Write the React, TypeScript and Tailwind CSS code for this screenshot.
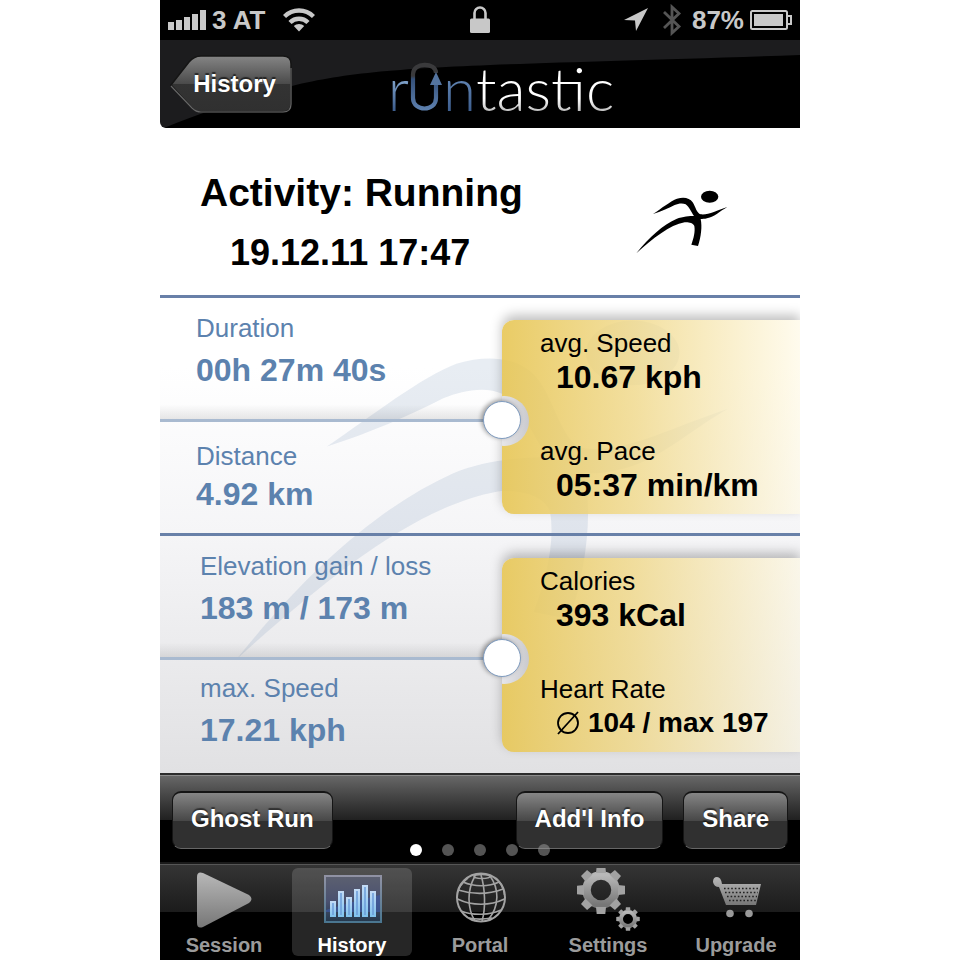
import type { ReactNode } from "react";

const RunnerShape = () => (
    <>
        <ellipse cx="270" cy="80" rx="26" ry="18" />
        <path d="M100 132C125 115 153 93 172 86C192 80 210 83 219 97C228 111 231 130 243 133C265 136 290 122 323 111C300 124 285 140 262 145C255 147 248 147 243 147C248 170 244 200 235 228L215 224C222 205 227 185 224 168C220 158 205 156 195 157C150 165 100 205 50 250C90 200 130 165 170 147C190 139 210 138 223 138C214 126 210 112 198 103C188 98 175 101 165 105C145 115 125 124 100 132Z" />
    </>
);

const StatusBar = () => (
    <div className="grid h-10 grid-cols-3 items-center bg-black px-2 text-[26px] leading-10 font-bold text-[#c8c8c8]">
        <div className="flex items-center gap-[6px]">
            <svg width="38" height="20" viewBox="0 0 38 20" fill="currentColor">
                <path d="M0 12h6v8H0zM8 10h6v10H8zM16 7h6v13h-6zM24 4h6v16h-6zM32 0h6v20h-6z" />
            </svg>
            <span>3 AT</span>
            <svg className="ml-3" width="32" height="24" viewBox="0 0 32 24" fill="none" stroke="currentColor" strokeWidth="4.4">
                <path d="M1.5 8.5C9.5 .5 22.5 .5 30.5 8.5M7 14.5C12 9.5 20 9.5 25 14.5" />
                <path d="M16 23.5L10.8 18C13.5 15.3 18.5 15.3 21.2 18Z" fill="currentColor" stroke="none" />
            </svg>
        </div>
        <svg className="mx-auto" width="20" height="28" viewBox="0 0 20 28">
            <path d="M4.5 13V7a5.5 5.5 0 0 1 11 0v6" fill="none" stroke="currentColor" strokeWidth="2.6" />
            <rect y="12.5" width="20" height="14.5" rx="1.5" fill="currentColor" />
        </svg>
        <div className="flex items-center justify-end gap-[6px] whitespace-nowrap">
            <svg className="mr-2" width="24" height="24" viewBox="0 0 24 24" fill="currentColor">
                <path d="M24 0L12 23L11 12.5L0 12Z" />
            </svg>
            <svg className="mr-1" width="20" height="32" viewBox="0 0 20 32" fill="none" stroke="#555" strokeWidth="2.8">
                <path d="M2 8L17 22.5L10 29V3L17 9.5L2 24" />
            </svg>
            <span>87%</span>
            <svg width="42" height="20" viewBox="0 0 42 20">
                <rect x="1" y="1" width="36" height="18" rx="1.5" fill="none" stroke="currentColor" strokeWidth="2" />
                <rect x="4" y="4" width="29" height="12" fill="currentColor" />
                <path d="M37 6h4v8h-4" fill="none" stroke="currentColor" strokeWidth="2" />
            </svg>
        </div>
    </div>
);

const Logo = () => (
    <h1 className="flex items-baseline font-['Lato',sans-serif] text-6xl leading-[70px] font-light text-white" aria-label="runtastic">
        <span className="bg-linear-to-b from-[#7ea0c8] from-40% to-[#3f6090] to-80% bg-clip-text text-transparent">r</span>
        <svg width="34" height="50" viewBox="-1 0 34 50" fill="none" strokeWidth="4.2">
            <defs>
                <linearGradient id="loop" x1="0" y1="0" x2="0" y2="50" gradientUnits="userSpaceOnUse">
                    <stop offset=".3" stopColor="#3a3a3c" />
                    <stop offset=".36" stopColor="#34507a" />
                    <stop offset="1" stopColor="#5f82b0" />
                </linearGradient>
            </defs>
            <path d="M26 12C26 1 3 1 3 13V37C3 51 26 51 26 37V22" stroke="url(#loop)" />
            <path d="M26 11L32 24H20Z" fill="#54749f" />
        </svg>
        <span className="bg-linear-to-b from-[#5f82b0] from-40% to-[#3f6090] to-80% bg-clip-text text-transparent">n</span>
        <span className="bg-linear-to-b from-white from-65% to-[#b8b8b8] to-85% bg-clip-text text-transparent">tastic</span>
    </h1>
);

const NavBar = () => (
    <header className="relative grid h-[88px] grid-cols-[1fr_auto_1fr] items-center overflow-hidden rounded-bl-md bg-[#1c1c1e] pl-[10px]">
        <svg className="absolute inset-0 h-full w-full" viewBox="0 0 640 88" preserveAspectRatio="none">
            <path d="M4 88C50 70 85 58 132 46C220 24 320 26 640 15V88Z" fill="#000" />
        </svg>
        <button className="relative h-[60px] w-[123px] pl-[6px] text-2xl font-bold text-white [text-shadow:0_-2px_1px_rgba(0,0,0,0.6)]">
            <svg className="absolute inset-0" width="123" height="60" viewBox="0 0 123 60">
                <defs>
                    <linearGradient id="back" x1="0" y1="0" x2="0" y2="1">
                        <stop offset="0" stopColor="#858585" />
                        <stop offset=".5" stopColor="#4a4a4a" />
                        <stop offset=".5" stopColor="#333" />
                        <stop offset="1" stopColor="#303030" />
                    </linearGradient>
                </defs>
                <path d="M1 31L19 8Q24 2 31 2H113Q121 2 121 10V50Q121 58 113 58H31Q26 58 22 54Z" fill="url(#back)" stroke="#151515" strokeWidth="1.5" />
                <path d="M1 32L22 54Q26 58 31 58H113Q121 58 121 50V14" fill="none" stroke="#666" strokeWidth="1.2" />
            </svg>
            <span className="relative">History</span>
        </button>
        <div className="relative pt-2 pl-8">
            <Logo />
        </div>
    </header>
);

type Stat = { label: string; value: ReactNode };

const StatRow = ({ label, value, className }: Stat & { className: string }) => (
    <div className={`flex flex-col text-[#5c82ae] ${className}`}>
        <span className="text-[26px] leading-8">{label}</span>
        <strong className="text-[32px] leading-10">{value}</strong>
    </div>
);

const GoldCard = ({ stats }: { stats: Stat[] }) => (
    <div className="relative mt-[22px] flex h-[194px] flex-col gap-[42px] rounded-l-xl bg-linear-to-r from-[#e7c654]/90 via-[#f0d888]/80 via-45% to-[#fff9e2]/60 pt-[9px] pl-[38px] shadow-[0_-5px_12px_rgba(0,0,0,0.25)]">
        <div className="absolute top-[76px] -left-[23px] h-[50px] w-[50px] rounded-full bg-linear-to-r from-transparent from-46% via-[#e6e6ea] via-46% to-[#cacace]" />
        <div className="absolute top-[81px] -left-[19px] h-[38px] w-[38px] rounded-full border border-[#7f9cc0] bg-white shadow-[-2px_-1px_4px_rgba(0,0,0,0.35)]" />
        {stats.map((stat) => (
            <div key={stat.label} className="flex flex-col text-black">
                <span className="text-[26px] leading-7">{stat.label}</span>
                <strong className="mt-[2px] pl-4 text-[32px] leading-9 whitespace-nowrap">{stat.value}</strong>
            </div>
        ))}
    </div>
);

const StatsSection = ({ left, right, indent, lowerRow }: { left: Stat[]; right: Stat[]; indent: string; lowerRow: string }) => (
    <section className="relative grid grid-cols-[342fr_298fr] border-t-[3px] border-[#6880a8]">
        <div>
            <StatRow {...left[0]} className={`h-[124px] gap-[6px] border-b-[3px] border-[#a9bad0] bg-linear-to-t from-black/9 to-transparent to-12% pt-[14px] ${indent}`} />
            <StatRow {...left[1]} className={`${lowerRow} ${indent}`} />
        </div>
        <GoldCard stats={right} />
    </section>
);

const ToolButton = ({ children }: { children: ReactNode }) => (
    <button className="h-[58px] rounded-[9px] border border-t-2 border-[#151515] border-b-[#666] bg-linear-to-b from-[#868686] via-[#484848] via-50% to-[#303030] to-50% px-[18px] pb-1 text-2xl font-bold whitespace-nowrap text-white [text-shadow:0_-2px_1px_rgba(0,0,0,0.5)]">
        {children}
    </button>
);

const Toolbar = () => (
    <div className="relative flex h-[89px] items-start gap-5 border-t-2 border-[#2c2c2c] bg-linear-to-b from-[#696969] via-[#202020] via-52% to-black to-52% px-3 pt-4 shadow-[inset_0_1px_0_#8c8c8c]">
        <ToolButton>Ghost Run</ToolButton>
        <div className="grow" />
        <ToolButton>Add'l Info</ToolButton>
        <ToolButton>Share</ToolButton>
        <div className="absolute inset-x-0 bottom-[6px] flex justify-center gap-5">
            {[0, 1, 2, 3, 4].map((page) => (
                <span key={page} className={`h-3 w-3 rounded-full ${page === 0 ? "bg-white" : "bg-[#999]/55"}`} />
            ))}
        </div>
    </div>
);

const TEETH = [0, 45, 90, 135, 180, 225, 270, 315];

const Gear = ({ x, y, scale }: { x: number; y: number; scale: number }) => (
    <g transform={`translate(${x} ${y}) scale(${scale})`}>
        <circle r="14.5" fill="none" stroke="url(#metal)" strokeWidth="8.5" />
        {TEETH.map((angle) => (
            <path key={angle} d="M-5 -17L-4.3 -24H4.3L5 -17Z" fill="#a2a2a2" transform={`rotate(${angle})`} />
        ))}
    </g>
);

const PlayIcon = () => (
    <path d="M21 9Q21 3 27 5L73 27Q78 31 73 35L27 59Q21 61 21 55Z" fill="url(#metal)" />
);

const ChartIcon = () => (
    <>
        <defs>
            <linearGradient id="chartBg" x1="0" y1="0" x2="0" y2="1">
                <stop offset="0" stopColor="#5c6070" />
                <stop offset=".55" stopColor="#4a5170" />
                <stop offset="1" stopColor="#24384c" />
            </linearGradient>
            <linearGradient id="chartEdge" x1="0" y1="0" x2="0" y2="1">
                <stop offset="0" stopColor="#9092a4" />
                <stop offset="1" stopColor="#4a7690" />
            </linearGradient>
            <linearGradient id="bar" x1="0" y1="0" x2="0" y2="1">
                <stop offset="0" stopColor="#c4dcf6" />
                <stop offset="1" stopColor="#7fc2ee" />
            </linearGradient>
        </defs>
        <rect x="21" y="8" width="56" height="46" fill="url(#chartBg)" stroke="url(#chartEdge)" strokeWidth="2" />
        <path d="M22 42C40 36 60 31 76 27V44H22Z" fill="#3c5ca8" opacity=".65" />
        {[16, 26, 20, 28, 32, 26].map((height, i) => (
            <g key={i}>
                <rect x={26 + i * 8} y={49 - height} width="6" height={height} fill="url(#bar)" />
                <rect x={28 + i * 8} y={51 - height} width="2" height={height - 4} fill="#6a9bd8" opacity=".75" />
            </g>
        ))}
    </>
);

const GlobeIcon = () => (
    <g fill="none" stroke="#a3a3a3" strokeWidth="1.6">
        <circle cx="49" cy="29.5" r="24" strokeWidth="2" />
        <path d="M49 7C53 20 54 40 50 53M43 8C35 22 35 40 43 53M58 8C67 20 68 38 56 52M36 10C28 17 25 22 25 30M64 10C69 15 72 21 72.5 27" />
        <ellipse cx="50" cy="8.5" rx="8" ry="2" />
        <path d="M31 14C42 19 57 19 67 14M26 22C42 27 58 26 71 21M25.5 31C40 38 58 38 72.500 31M29 43C42 48 58 47 69 42M37 50C46 52 54 51 60 50" />
    </g>
);

const SettingsIcon = () => (
    <>
        <Gear x={41} y={22} scale={1} />
        <Gear x={68} y={51} scale={0.49} />
    </>
);

const CartIcon = () => (
    <>
        <path d="M25 14Q25 9 29 9Q33 9 34 16H73L68 37H38L31 19Q26 19 25 14Z" fill="url(#metal)" />
        <path d="M36 19.500H71M37 23.500H70M39 27.500H69M41 31.500H68" transform="translate(0 1)" stroke="#222" strokeWidth="1.5" strokeDasharray="1.6 2" />
        <circle cx="42" cy="45.5" r="3.8" fill="#999" />
        <circle cx="61" cy="45.5" r="3.8" fill="#999" />
    </>
);

const tabs = [
    { name: "Session", icon: <PlayIcon /> },
    { name: "History", icon: <ChartIcon /> },
    { name: "Portal", icon: <GlobeIcon /> },
    { name: "Settings", icon: <SettingsIcon /> },
    { name: "Upgrade", icon: <CartIcon /> },
];

const TabBar = () => (
    <nav className="grid h-[98px] grid-cols-5 border-t-2 border-[#1a1a1a] bg-linear-to-b from-[#353535] via-[#1c1c1c] via-50% to-black to-50% shadow-[inset_0_1px_0_#565656]">
        {tabs.map(({ name, icon }) => (
            <a
                key={name}
                href={`#${name.toLowerCase()}`}
                className={`mx-1 mt-1 h-[88px] rounded-md text-center text-xl leading-6 font-bold ${name === "History" ? "bg-white/15 text-white" : "text-[#9b9b9b]"}`}
            >
                <svg className="mx-auto block" width="96" height="65" viewBox="0 0 96 65">
                    {icon}
                </svg>
                {name}
            </a>
        ))}
    </nav>
);

export default function App() {
    return (
        <div className="min-h-screen bg-white font-['Liberation_Sans',Arial,sans-serif]">
            <svg className="absolute" width="0" height="0">
                <linearGradient id="metal" x1="0" y1="0" x2="0" y2="1">
                    <stop offset="0" stopColor="#b8b8b8" />
                    <stop offset="1" stopColor="#777" />
                </linearGradient>
            </svg>
            <div className="mx-auto max-w-[640px]">
                <StatusBar />
                <NavBar />
                <div className="flex h-[167px] items-start justify-between pt-[41px] pr-[72px] pl-10 text-black">
                    <div>
                        <h2 className="text-[39px] leading-[48px] font-bold">Activity: Running</h2>
                        <p className="mt-[14px] pl-[30px] text-4xl leading-[44px] font-bold">19.12.11 17:47</p>
                    </div>
                    <svg className="mt-[21px]" width="92" height="65" viewBox="49 60 276 195">
                        <RunnerShape />
                    </svg>
                </div>
                <main className="relative overflow-hidden bg-linear-to-b from-white from-15% via-[#f5f5f7] via-50% to-[#e1e1e3]">
                    <svg className="absolute top-[22px] left-[12%] w-[77%]" viewBox="50 60 274 192" fill="#6488ad" fillOpacity=".15">
                        <RunnerShape />
                    </svg>
                    <StatsSection
                        indent="pl-9"
                        lowerRow="h-[111px] pt-[18px] gap-[2px]"
                        left={[
                            { label: "Duration", value: "00h 27m 40s" },
                            { label: "Distance", value: "4.92 km" },
                        ]}
                        right={[
                            { label: "avg. Speed", value: "10.67 kph" },
                            { label: "avg. Pace", value: "05:37 min/km" },
                        ]}
                    />
                    <StatsSection
                        indent="pl-10"
                        lowerRow="h-[113px] pt-3 gap-[6px]"
                        left={[
                            { label: "Elevation gain / loss", value: "183 m / 173 m" },
                            { label: "max. Speed", value: "17.21 kph" },
                        ]}
                        right={[
                            { label: "Calories", value: "393 kCal" },
                            {
                                label: "Heart Rate",
                                value: (
                                    <span className="flex items-center gap-2 text-[28px]">
                                        <svg width="24" height="24" viewBox="0 0 24 24" fill="none" stroke="currentColor" strokeWidth="1.8" role="img" aria-label="average">
                                            <circle cx="12" cy="12" r="10" />
                                            <path d="M2 23L22 1" />
                                        </svg>
                                        104 / max 197
                                    </span>
                                ),
                            },
                        ]}
                    />
                </main>
                <Toolbar />
                <TabBar />
            </div>
        </div>
    );
}
